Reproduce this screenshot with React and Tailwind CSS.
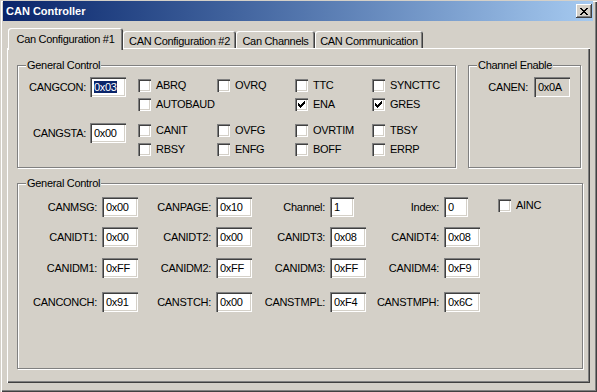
import React from "react";

const sunken =
    "shadow-[inset_1px_1px_0_#808080,inset_2px_2px_0_#404040,inset_-1px_-1px_0_#ffffff,inset_-2px_-2px_0_#d4d0c8]";

function Field({value, w = 36, readOnly = false, selected = false}) {
    return (
        <div
            className={`h-[20px] pl-[4px] pt-[3px] leading-[14px] ${sunken} ${readOnly ? 'bg-[#d4d0c8]' : 'bg-white'}`}
            style={{width: w}}
        >
            {selected ? <span className="bg-[#0a246a] text-white">{value}</span> : value}
        </div>
    );
}

function Check({label, checked = false}) {
    return (
        <div className="flex items-center gap-[5px]">
            <div className={`w-[13px] h-[13px] bg-white flex items-center justify-center ${sunken}`}>
                {checked && (
                    <svg width={7} height={7} viewBox="0 0 7 7" shapeRendering="crispEdges">
                        <path
                            fill="#000"
                            d="M6 0h1v1h-1z M5 1h2v1h-2z M0 2h1v1h-1z M4 2h3v1h-3z M0 3h2v1h-2z M3 3h3v1h-3z M0 4h5v1h-5z M1 5h3v1h-3z M2 6h1v1h-1z"
                        />
                    </svg>
                )}
            </div>
            <span>{label}</span>
        </div>
    );
}

function Group({title, className, children}) {
    return (
        <div className={`relative border border-[#808080] shadow-[inset_1px_1px_0_#ffffff,1px_1px_0_#ffffff] ${className}`}>
            <span className="absolute -top-[8px] left-[8px] px-[1px] bg-[#d4d0c8] leading-[14px]">{title}</span>
            {children}
        </div>
    );
}

function CheckBlock({label, value, selected, rows, className = "", fieldTop}) {
    return (
        <div className={`flex ${className}`}>
            <div className={`w-[120px] h-[20px] flex items-center justify-end gap-[4px] pr-[12px] ${fieldTop}`}>
                <span>{label}</span>
                <Field value={value} selected={selected}/>
            </div>
            <div className="grid grid-cols-[79px_78px_77px_auto]">
                {rows.flat().map((c, i) => (
                    <div key={i} className="h-[19px] flex items-center">
                        {c && <Check label={c[0]} checked={c[1]}/>}
                    </div>
                ))}
            </div>
        </div>
    );
}

function Pair({label, value, first = false, w = 36}) {
    return (
        <div className={`flex items-center ${first ? 'w-[120px]' : 'w-[114px]'}`}>
            <span className="flex-1 text-right pr-[5px] whitespace-nowrap">{label}</span>
            <div className="w-[36px]">
                <Field value={value} w={w}/>
            </div>
        </div>
    );
}

function Tab({label, active = false, w}) {
    if (active) {
        return (
            <div
                className="relative z-10 h-[22px] -mb-[2px] bg-[#d4d0c8] rounded-t-[3px] text-center pt-[4px] leading-[14px] whitespace-nowrap shadow-[inset_1px_1px_0_#ffffff,inset_-1px_0_0_#404040,inset_-2px_0_0_#808080]"
                style={{width: w}}
            >
                {label}
            </div>
        );
    }
    return (
        <div
            className="h-[17px] bg-[#d4d0c8] rounded-t-[3px] text-center pt-[3px] leading-[14px] whitespace-nowrap shadow-[inset_1px_1px_0_#ffffff,inset_-1px_0_0_#404040,inset_-2px_0_0_#808080]"
            style={{width: w}}
        >
            {label}
        </div>
    );
}

export default function App() {
    return (
        <div className="w-[597px] h-[392px] bg-[#d4d0c8] pt-[1px] pl-[3px] pr-[4px] text-[11px] text-black font-['Liberation_Sans',Arial,sans-serif] shadow-[inset_1px_1px_0_#d4d0c8,inset_2px_2px_0_#ffffff,inset_-1px_-1px_0_#404040,inset_-2px_-2px_0_#808080]">
            {/* title bar */}
            <div className="h-[20px] flex items-center justify-between pl-[3px] pr-[1px] bg-gradient-to-r from-[#0a246a] to-[#a6caf0]">
                <span className="text-white font-bold leading-[14px]">CAN Controller</span>
                <div className="w-[16px] h-[14px] bg-[#d4d0c8] flex items-center justify-center shadow-[inset_-1px_-1px_0_#404040,inset_1px_1px_0_#ffffff,inset_-2px_-2px_0_#808080]">
                    <svg width={8} height={7} viewBox="0 0 8 7" shapeRendering="crispEdges">
                        <path
                            fill="#000"
                            d="M0 0h2v1h-2z M6 0h2v1h-2z M1 1h2v1h-2z M5 1h2v1h-2z M2 2h4v1h-4z M3 3h2v1h-2z M2 4h4v1h-4z M1 5h2v1h-2z M5 5h2v1h-2z M0 6h2v1h-2z M6 6h2v1h-2z"
                        />
                    </svg>
                </div>
            </div>

            <div className="ml-[4px] w-[583px] tracking-[-0.3px]">
                {/* tabs */}
                <div className="mt-[7px] h-[20px] flex items-end pl-[1px]">
                    <Tab label="Can Configuration #1" active w={115}/>
                    <Tab label="CAN Configuration #2" w={113}/>
                    <Tab label="Can Channels" w={79}/>
                    <Tab label="CAN Communication" w={108}/>
                </div>

                {/* tab panel */}
                <div className="h-[335px] pl-[10px] pt-[17px] shadow-[inset_1px_1px_0_#ffffff,inset_-1px_-1px_0_#404040,inset_-2px_-2px_0_#808080]">
                    <div className="flex">
                        <Group title="General Control" className="w-[439px] h-[103px]">
                            <div className="pt-[10px]">
                                <CheckBlock
                                    label="CANGCON:"
                                    value="0x03"
                                    selected
                                    fieldTop="mt-[1px]"
                                    rows={[
                                        [["ABRQ"], ["OVRQ"], ["TTC"], ["SYNCTTC"]],
                                        [["AUTOBAUD"], null, ["ENA", true], ["GRES", true]],
                                    ]}
                                />
                                <CheckBlock
                                    label="CANGSTA:"
                                    value="0x00"
                                    className="mt-[7px]"
                                    fieldTop="mt-[2px]"
                                    rows={[
                                        [["CANIT"], ["OVFG"], ["OVRTIM"], ["TBSY"]],
                                        [["RBSY"], ["ENFG"], ["BOFF"], ["ERRP"]],
                                    ]}
                                />
                            </div>
                        </Group>
                        <Group title="Channel Enable" className="ml-[12px] w-[113px] h-[103px]">
                            <div className="pt-[10px]">
                                <div className="mt-[1px] h-[20px] flex items-center justify-end gap-[6px] pr-[10px]">
                                    <span>CANEN:</span>
                                    <Field value="0x0A" readOnly/>
                                </div>
                            </div>
                        </Group>
                    </div>

                    <Group title="General Control" className="mt-[15px] w-[566px] h-[186px]">
                        <div className="mt-[13px] h-[20px] flex items-center">
                            <Pair label="CANMSG:" value="0x00" first/>
                            <Pair label="CANPAGE:" value="0x10"/>
                            <Pair label="Channel:" value="1" w={24}/>
                            <Pair label="Index:" value="0" w={24}/>
                            <div className="ml-[18px] self-start">
                                <Check label="AINC"/>
                            </div>
                        </div>
                        <div className="mt-[10px] h-[20px] flex items-center">
                            <Pair label="CANIDT1:" value="0x00" first/>
                            <Pair label="CANIDT2:" value="0x00"/>
                            <Pair label="CANIDT3:" value="0x08"/>
                            <Pair label="CANIDT4:" value="0x08"/>
                        </div>
                        <div className="mt-[11px] h-[20px] flex items-center">
                            <Pair label="CANIDM1:" value="0xFF" first/>
                            <Pair label="CANIDM2:" value="0xFF"/>
                            <Pair label="CANIDM3:" value="0xFF"/>
                            <Pair label="CANIDM4:" value="0xF9"/>
                        </div>
                        <div className="mt-[14px] h-[20px] flex items-center">
                            <Pair label="CANCONCH:" value="0x91" first/>
                            <Pair label="CANSTCH:" value="0x00"/>
                            <Pair label="CANSTMPL:" value="0xF4"/>
                            <Pair label="CANSTMPH:" value="0x6C"/>
                        </div>
                    </Group>
                </div>
            </div>
        </div>
    );
}
